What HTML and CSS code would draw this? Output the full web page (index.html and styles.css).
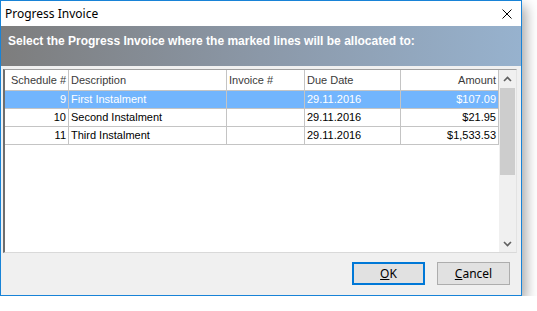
FILE: index.html
```html
<!DOCTYPE html>
<html lang="en">
<head>
    <meta charset="UTF-8">
    <title>Progress Invoice</title>
    <link rel="stylesheet" href="styles.css">
</head>
<body>

    <div class="window">
        <div class="titlebar">
            <span class="title">Progress Invoice</span>
            <svg class="close" width="10" height="10" viewBox="0 0 10 10">
                <path d="M0.5 0.5 L9.5 9.5 M9.5 0.5 L0.5 9.5" stroke="#000" stroke-width="1"/>
            </svg>
        </div>

        <div class="banner">Select the Progress Invoice where the marked lines will be allocated to:</div>

        <div class="content">
            <div class="grid">
                <table class="lines">
                    <colgroup>
                        <col class="c-sched">
                        <col class="c-desc">
                        <col class="c-inv">
                        <col class="c-due">
                        <col class="c-amt">
                    </colgroup>
                    <thead>
                        <tr>
                            <th class="num">Schedule #</th>
                            <th>Description</th>
                            <th>Invoice #</th>
                            <th>Due Date</th>
                            <th class="num">Amount</th>
                        </tr>
                    </thead>
                    <tbody>
                        <tr class="selected">
                            <td class="num">9</td>
                            <td>First Instalment</td>
                            <td></td>
                            <td>29.11.2016</td>
                            <td class="num">$107.09</td>
                        </tr>
                        <tr>
                            <td class="num">10</td>
                            <td>Second Instalment</td>
                            <td></td>
                            <td>29.11.2016</td>
                            <td class="num">$21.95</td>
                        </tr>
                        <tr>
                            <td class="num">11</td>
                            <td>Third Instalment</td>
                            <td></td>
                            <td>29.11.2016</td>
                            <td class="num">$1,533.53</td>
                        </tr>
                    </tbody>
                </table>

                <div class="scrollbar">
                    <div class="arrow">
                        <svg width="9" height="6" viewBox="0 0 9 6"><path d="M1 5 L4.5 1.5 L8 5" fill="none" stroke="#606060" stroke-width="1.6"/></svg>
                    </div>
                    <div class="thumb"></div>
                    <div class="track"></div>
                    <div class="arrow">
                        <svg width="9" height="6" viewBox="0 0 9 6"><path d="M1 1 L4.5 4.5 L8 1" fill="none" stroke="#606060" stroke-width="1.6"/></svg>
                    </div>
                </div>
            </div>

            <div class="buttons">
                <button class="btn default"><u>O</u>K</button>
                <button class="btn"><u>C</u>ancel</button>
            </div>
        </div>
    </div>

</body>
</html>
```

FILE: styles.css
```css
/* General */
body {
    margin: 0;
    background-color: #fff;
    font-family: 'Liberation Sans', Arial, sans-serif;
    font-size: 11px;
    color: #000;
}

/* Dialog window */
.window {
    width: 520px;
    height: 294px;
    border: 1px solid #1883d7;
    display: flex;
    flex-direction: column;
    box-shadow: 4px 6px 12px rgba(0, 0, 0, 0.35);
    background-color: #f0f0f0;
}

.titlebar {
    height: 25px;
    background-color: #fff;
    display: flex;
    align-items: center;
    justify-content: space-between;
}

.title {
    font-family: 'Noto Sans', sans-serif;
    font-size: 12px;
    padding-left: 4px;
}

.close {
    margin-right: 9px;
}

/* Header banner */
.banner {
    height: 40px;
    box-sizing: border-box;
    padding: 8px 0 0 7px;
    line-height: 14px;
    font-size: 12px;
    font-weight: bold;
    color: #fff;
    background: linear-gradient(to right, #7d7d7d, #8b98a8 50%, #97b2ce);
}

.content {
    flex: 1;
    display: flex;
    flex-direction: column;
}

/* Grid */
.grid {
    margin: 3px 4px 0 2px;
    height: 182px;
    display: flex;
    background-color: #fff;
    border-top: 1px solid #a0a0a0;
    border-left: 2px solid #6e6e6e;
    border-bottom: 1px solid #d9d9d9;
    border-right: 1px solid #e3e3e3;
}

.lines {
    width: 494px;
    table-layout: fixed;
    border-collapse: separate;
    border-spacing: 0;
    align-self: flex-start;
}

.c-sched { width: 64px; }
.c-desc  { width: 158px; }
.c-inv   { width: 78px; }
.c-due   { width: 96px; }
.c-amt   { width: 98px; }

.lines th,
.lines td {
    border-right: 1px solid #c4c4c4;
    border-bottom: 1px solid #c4c4c4;
    padding: 0 2px;
    text-align: left;
    white-space: nowrap;
    overflow: hidden;
}

.lines th {
    height: 20px;
    font-weight: normal;
    color: #3a3a3a;
}

.lines td {
    height: 17px;
    line-height: 17px;
}

.lines .num {
    text-align: right;
}

.lines tr.selected td {
    background-color: #72b5fd;
    color: #fff;
}

/* Scrollbar */
.scrollbar {
    width: 17px;
    display: flex;
    flex-direction: column;
    background-color: #f0f0f0;
}

.arrow {
    height: 17px;
    display: flex;
    align-items: center;
    justify-content: center;
}

.thumb {
    height: 87px;
    margin: 1px 1px 0;
    background-color: #cdcdcd;
}

.track {
    flex: 1;
}

/* Buttons */
.buttons {
    display: flex;
    justify-content: flex-end;
    gap: 12px;
    padding: 9px 11px 0 0;
}

.btn {
    width: 73px;
    height: 23px;
    box-sizing: border-box;
    background-color: #e1e1e1;
    border: 1px solid #adadad;
    font-family: 'Noto Sans', sans-serif;
    font-size: 12px;
    color: #000;
    padding: 0;
}

.btn.default {
    border: 2px solid #0078d7;
}
```
